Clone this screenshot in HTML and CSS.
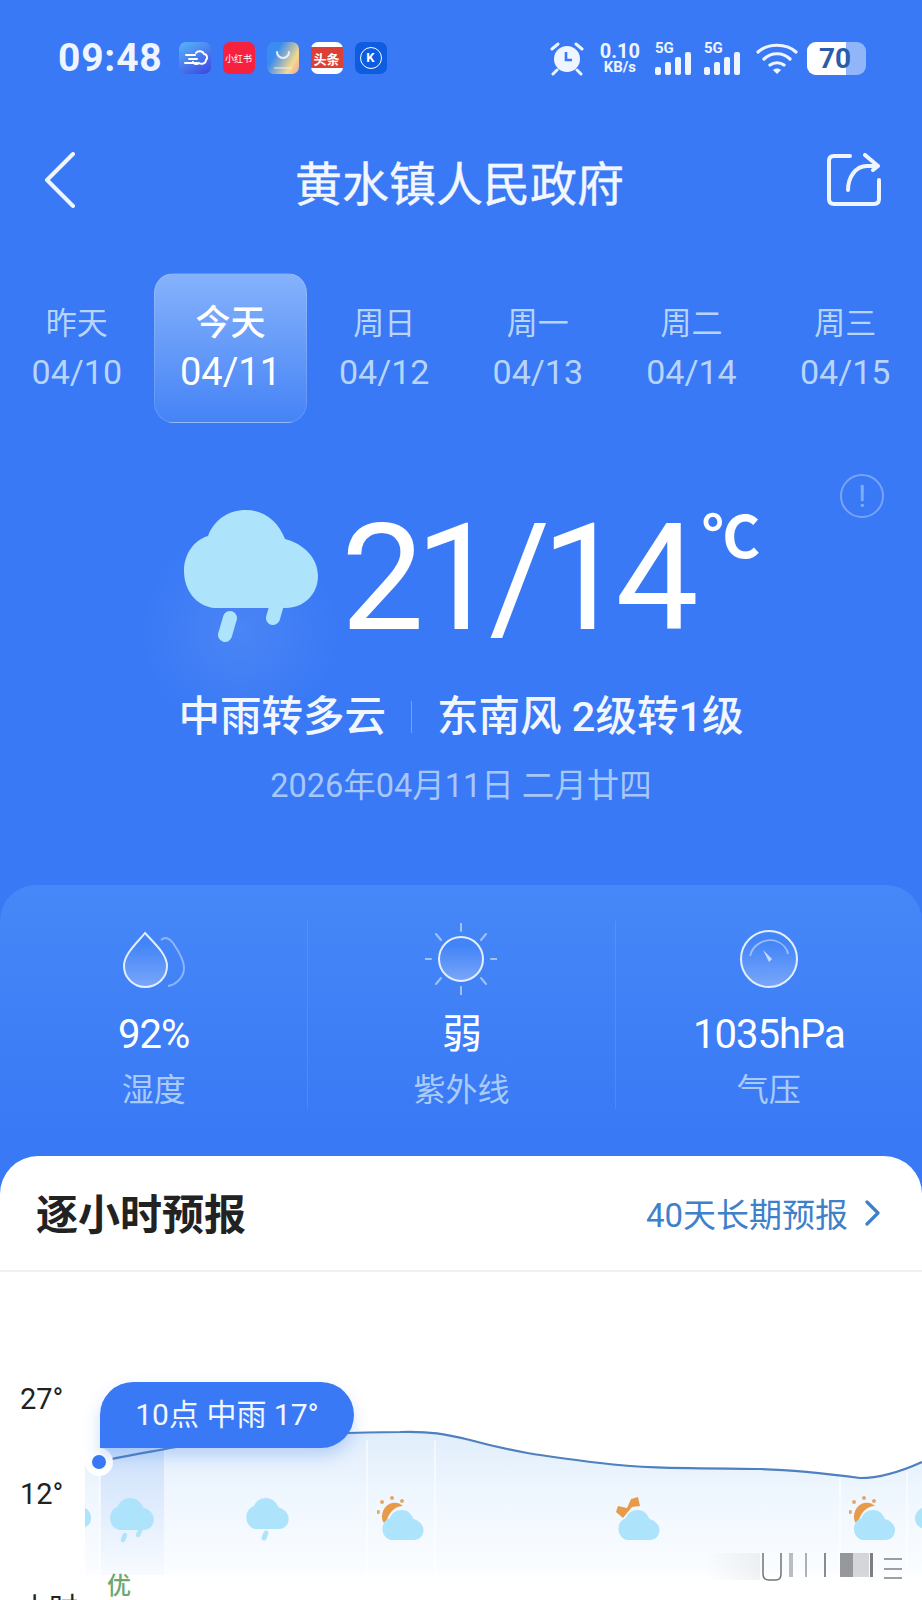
FILE: index.html
```html
<!DOCTYPE html>
<html lang="zh-CN">
<head>
  <meta charset="UTF-8">
  <meta name="viewport" content="width=device-width, initial-scale=1.0">
  <title>黄水镇人民政府 天气</title>
  <link rel="stylesheet" href="styles.css">
</head>
<body>
<svg class="defs" width="0" height="0">
  <defs>
    <symbol id="cloud" viewBox="0 0 134 98">
      <path d="M30 98C12 96 0 80 0 61C0 44 10 30 24 26C30 10 44 0 62 0C80 0 94 11 101 29C120 34 134 48 134 66C134 84 120 98 102 98Z" fill="#ade3fb"/>
    </symbol>
    <symbol id="sun" viewBox="0 0 30 30">
      <path d="M6 26C3 18 7 9 15 7C19 6 23 7 26 10C19 10 12 15 9 27Z" fill="#e89a4b"/>
      <g fill="#e3a66c">
        <circle cx="15" cy="2" r="2"/><circle cx="5" cy="6" r="2"/><circle cx="25" cy="5" r="2"/><circle cx="1" cy="16" r="2"/>
      </g>
    </symbol>
    <linearGradient id="area" x1="0" y1="0" x2="0" y2="1">
      <stop offset="0" stop-color="#e0edfb"/>
      <stop offset="0.4" stop-color="#eef6fe"/>
      <stop offset="1" stop-color="#fbfdff"/>
    </linearGradient>
    <linearGradient id="today" x1="0" y1="0" x2="0" y2="1">
      <stop offset="0" stop-color="#c9defa"/>
      <stop offset="1" stop-color="#f8fbff"/>
    </linearGradient>
    <linearGradient id="fill" x1="0" y1="0" x2="0" y2="1">
      <stop offset="0.2" stop-color="#ffffff" stop-opacity="0"/>
      <stop offset="1" stop-color="#ffffff" stop-opacity="0.3"/>
    </linearGradient>
    <linearGradient id="fade" x1="0" y1="0" x2="1" y2="0">
      <stop offset="0" stop-color="#000000" stop-opacity="0"/>
      <stop offset="1" stop-color="#000000" stop-opacity="0.05"/>
    </linearGradient>
  </defs>
</svg>

<div class="phone">
  <div class="status">
    <div class="status-left">
      <span class="time">09:48</span>
      <div class="apps">
        <span class="app app-cloud">
          <svg viewBox="0 0 32 32"><path d="M7 13h9M10 17h8M6 21h12M17 11c2-3 7-2 8 1c3 0 4 4 2 6c0 3-4 5-7 3c-2 2-5 1-6-1" fill="none" stroke="#fff" stroke-width="2" stroke-linecap="round"/></svg>
        </span>
        <span class="app app-red">小红书</span>
        <span class="app app-pay">
          <svg viewBox="0 0 32 32"><path d="M10 10a6 6 0 0 0 12 0" fill="none" stroke="#e8f2ff" stroke-width="2" stroke-linecap="round"/><path d="M7 26h18" stroke="#e8f2ff" stroke-width="1"/></svg>
        </span>
        <span class="app app-news"><b>头条</b></span>
        <span class="app app-k"><i>K</i></span>
      </div>
    </div>
    <div class="status-right">
      <svg class="alarm" viewBox="0 0 36 36">
        <circle cx="18" cy="19" r="13" fill="#eef5fe"/>
        <path d="M17 12v8h6" fill="none" stroke="#3979f5" stroke-width="2.6"/>
        <path d="M3 9l6-5M33 9l-6-5M8 30l-4 4M28 30l4 4" stroke="#eef5fe" stroke-width="3" stroke-linecap="round"/>
      </svg>
      <div class="speed"><span>0.10</span><span class="speed-unit">KB/s</span></div>
      <div class="signal"><span class="five-g">5G</span><i class="b1"></i><i class="b2"></i><i class="b3"></i><i class="b4"></i></div>
      <div class="signal"><span class="five-g">5G</span><i class="b1"></i><i class="b2"></i><i class="b3"></i><i class="b4"></i></div>
      <svg class="wifi" viewBox="0 0 42 32">
        <path d="M2 10C12 1 30 1 40 10M8 17C15 10 27 10 34 17M14 23C18 20 24 20 28 23" fill="none" stroke="#eef5fe" stroke-width="3.2" stroke-linecap="round"/>
        <path d="M17 28L21 32L25 28C23 26 19 26 17 28Z" fill="#eef5fe"/>
      </svg>
      <div class="battery"><div class="battery-full"></div><span>70</span></div>
    </div>
  </div>

  <div class="nav">
    <svg class="back" viewBox="0 0 32 56"><path d="M29 2L3 28L29 54" fill="none" stroke="#eef5fe" stroke-width="4" stroke-linecap="round" stroke-linejoin="round"/></svg>
    <div class="title">黄水镇人民政府</div>
    <svg class="share" viewBox="0 0 54 54">
      <path d="M23 3H7Q2 3 2 8V46Q2 51 7 51H47Q52 51 52 46V27" fill="none" stroke="#eef5fe" stroke-width="4" stroke-linecap="round"/>
      <path d="M21 37C21 25 28 13 40 13H51M38 2L51 13L46 17" fill="none" stroke="#eef5fe" stroke-width="4" stroke-linecap="round" stroke-linejoin="round"/>
    </svg>
  </div>

  <div class="tabs">
    <div class="tab"><span class="tab-day">昨天</span><span class="tab-date">04/10</span></div>
    <div class="tab tab-on"><span class="tab-day">今天</span><span class="tab-date">04/11</span></div>
    <div class="tab"><span class="tab-day">周日</span><span class="tab-date">04/12</span></div>
    <div class="tab"><span class="tab-day">周一</span><span class="tab-date">04/13</span></div>
    <div class="tab"><span class="tab-day">周二</span><span class="tab-date">04/14</span></div>
    <div class="tab"><span class="tab-day">周三</span><span class="tab-date">04/15</span></div>
  </div>

  <div class="hero">
    <span class="info">!</span>
    <div class="hero-row">
      <svg class="hero-icon" viewBox="0 0 134 132">
        <use href="#cloud" x="0" y="0" width="134" height="98"/>
        <path d="M46 108L41 125M93 94L89 108" stroke="#ade3fb" stroke-width="14" stroke-linecap="round"/>
      </svg>
      <div class="temp">21/14<sup>℃</sup></div>
    </div>
    <div class="cond"><span>中雨转多云</span><i class="cond-sep"></i><span>东南风 2级转1级</span></div>
    <div class="hero-date">2026年04月11日 二月廿四</div>
  </div>

  <div class="stats">
    <div class="stat">
      <svg class="stat-icon" viewBox="0 0 72 72">
        <path d="M43 17C48 13 52 16 55 20C62 30 66 38 66 45C66 54 58 62 50 63" fill="none" stroke="#fff" stroke-opacity=".4" stroke-width="2"/>
        <path d="M27 10C36 20 49 31 49 43C49 55 39 64 27 64C16 64 6 55 6 43C6 31 19 20 27 10Z" fill="url(#fill)" stroke="#e3eefe" stroke-width="2"/>
      </svg>
      <span class="stat-value">92%</span>
      <span class="stat-label">湿度</span>
    </div>
    <div class="stat">
      <svg class="stat-icon" viewBox="0 0 72 72">
        <circle cx="36" cy="36" r="22" fill="url(#fill)" stroke="#e3eefe" stroke-width="2"/>
        <path d="M36 0V8M36 64V72M0 36H6M66 36H72M11 11L16 17M61 11L56 17M11 61L16 55M61 61L56 55" stroke="#fff" stroke-opacity=".5" stroke-width="2" stroke-linecap="round"/>
      </svg>
      <span class="stat-value">弱</span>
      <span class="stat-label">紫外线</span>
    </div>
    <div class="stat">
      <svg class="stat-icon" viewBox="0 0 72 72">
        <circle cx="36" cy="36" r="28" fill="url(#fill)" stroke="#e3eefe" stroke-width="2"/>
        <path d="M17 33C20 21 32 15 43 18C49 20 54 25 55 31" fill="none" stroke="#fff" stroke-opacity=".45" stroke-width="1.8"/>
        <path d="M30 27L39 36L36 39Z" fill="#c6dcfb"/>
      </svg>
      <span class="stat-value">1035hPa</span>
      <span class="stat-label">气压</span>
    </div>
  </div>

  <div class="card">
    <div class="card-head">
      <h2>逐小时预报</h2>
      <a class="card-link">40天长期预报
        <svg viewBox="0 0 16 26"><path d="M3 2L14 13L3 24" fill="none" stroke="#3f80cb" stroke-width="3.2" stroke-linecap="round" stroke-linejoin="round"/></svg>
      </a>
    </div>
    <div class="chart">
      <svg class="chart-svg" viewBox="0 1272 922 328">
        <path d="M85 1466L99 1462C130 1454 165 1450 190 1444C260 1437 340 1432 400 1432C430 1431 445 1434 470 1440C510 1451 540 1456 600 1463C640 1468 670 1468 760 1469C800 1470 830 1474 860 1478C880 1478 900 1472 922 1462V1575H85Z" fill="url(#area)"/>
        <rect x="100" y="1440" width="66" height="135" fill="url(#today)"/>
        <path d="M100 1462V1578M165 1440V1578M367 1440V1578M435 1440V1578M840 1476V1578M907 1472V1578" stroke="#fff" stroke-opacity=".75" stroke-width="1.5"/>
        <path d="M99 1462C130 1454 165 1450 190 1444C260 1437 340 1432 400 1432C430 1431 445 1434 470 1440C510 1451 540 1456 600 1463C640 1468 670 1468 760 1469C800 1470 830 1474 860 1478C880 1478 900 1472 922 1462" fill="none" stroke="#4f80bf" stroke-width="2.2"/>

        <use href="#cloud" x="110" y="1498" width="44" height="32"/>
        <path d="M125 1535L123 1540M140 1531L138 1535" stroke="#ade3fb" stroke-width="4.5" stroke-linecap="round"/>
        <use href="#cloud" x="246" y="1498" width="43" height="31"/>
        <path d="M266 1533L264 1538" stroke="#ade3fb" stroke-width="5" stroke-linecap="round"/>
        <use href="#sun" x="377" y="1496" width="30" height="30"/>
        <use href="#cloud" x="382" y="1510" width="42" height="30"/>
        <path d="M616 1512L623 1518L632 1507L640 1506L638 1497L631 1499L627 1508L618 1506Z" fill="#e89a4b"/>
        <use href="#cloud" x="618" y="1510" width="42" height="30"/>
        <use href="#sun" x="849" y="1496" width="30" height="30"/>
        <use href="#cloud" x="853" y="1510" width="43" height="30"/>
        <path d="M85 1508C89 1510 91 1514 91 1518C91 1522 89 1526 85 1527Z" fill="#ade3fb"/>
        <path d="M922 1508C918 1510 915 1514 915 1518C915 1523 918 1527 922 1528Z" fill="#ade3fb"/>

        <rect x="705" y="1553" width="55" height="27" fill="url(#fade)"/>
        <g class="smudge">
          <path d="M763 1553V1574Q763 1580 769 1580H776Q781 1580 781 1574V1553" fill="none" stroke="#000" stroke-opacity=".55" stroke-width="1.5"/>
          <rect x="789" y="1553" width="4" height="24" opacity=".25"/>
          <rect x="805" y="1553" width="2" height="24" opacity=".3"/>
          <rect x="824" y="1553" width="2" height="24" opacity=".45"/>
          <rect x="840" y="1553" width="13" height="24" opacity=".4"/>
          <rect x="853" y="1553" width="16" height="24" opacity=".15"/>
          <rect x="870" y="1553" width="3" height="24" opacity=".5"/>
          <path d="M884 1559H902M884 1569H902M884 1578H902" stroke="#000" stroke-opacity=".5" stroke-width="1.5"/>
        </g>
      </svg>
      <span class="axis axis-high">27°</span>
      <span class="axis axis-low">12°</span>
      <span class="axis axis-clip">小时</span>
      <div class="dot"></div>
      <div class="tip">10点 中雨 17°</div>
      <span class="air">优</span>
    </div>
  </div>
</div>
</body>
</html>
```

FILE: styles.css
```css
html,body{
  margin: 0;
  background: #3979f5;
  font-family: Roboto, "Noto Sans CJK SC", sans-serif;
}
.defs{
  position: absolute;
}
.phone{
  width: 922px;
  height: 1600px;
  overflow: hidden;
  display: flex;
  flex-direction: column;
  background: #3979f5;
  color: #fff;
}

/* status bar */
.status{
  height: 40px;
  margin-top: 38px;
  padding: 0 56px 0 58px;
  display: flex;
  justify-content: space-between;
  align-items: center;
}
.status-left,.status-right,.apps{
  display: flex;
  align-items: center;
}
.time{
  font-size: 39px;
  font-weight: 700;
  color: #eef5fe;
  letter-spacing: .8px;
}
.apps{
  margin-left: 16px;
  gap: 12px;
}
.app{
  width: 32px;
  height: 32px;
  border-radius: 7px;
  display: flex;
  align-items: center;
  justify-content: center;
  overflow: hidden;
  font-size: 9px;
  white-space: nowrap;
}
.app svg{
  width: 32px;
  height: 32px;
}
.app-cloud{
  background: linear-gradient(150deg, #58b6fb, #3c45e0);
}
.app-red{
  background: #f5213f;
}
.app-pay{
  background: linear-gradient(120deg, #3b8cf0 30%, #f6d98f 75%, #eda4a0);
}
.app-news{
  background: linear-gradient(#fff 15%, #dc3f36 15%, #dc3f36 80%, #fff 80%);
  font-size: 13px;
}
.app-k{
  background: #0e5de0;
}
.app-k i{
  width: 20px;
  height: 20px;
  border: 1.5px solid #fff;
  border-radius: 50%;
  font: 700 13px/20px Roboto, sans-serif;
  text-align: center;
}
.status-right{
  gap: 12px;
  height: 36px;
}
.alarm{
  width: 36px;
  height: 36px;
}
.speed{
  margin: 0 3px;
  display: flex;
  flex-direction: column;
  align-items: center;
  font-size: 20px;
  line-height: 18px;
  font-weight: 700;
  color: #eef5fe;
}
.speed-unit{
  font-size: 15px;
  line-height: 15px;
}
.signal{
  position: relative;
  width: 40px;
  height: 34px;
  display: flex;
  align-items: flex-end;
  gap: 4px;
}
.signal + .signal{
  margin-left: -3px;
}
.signal i{
  width: 6px;
  border-radius: 2px;
  background: #eef5fe;
}
.five-g{
  position: absolute;
  left: 0;
  top: 0;
  font-size: 15px;
  line-height: 14px;
  font-weight: 700;
  color: #eef5fe;
}
.b1{ height: 8px; }
.b2{ height: 13px; }
.b3{ height: 18px; }
.b4{ height: 23px; }
.wifi{
  width: 42px;
  height: 32px;
}
.battery{
  position: relative;
  width: 59px;
  height: 33px;
  margin-left: -3px;
  border-radius: 9px;
  background: rgba(255,255,255,.45);
  font-size: 28px;
  font-weight: 700;
  line-height: 33px;
  color: #2b5cab;
}
.battery-full{
  position: absolute;
  left: 0;
  top: 0;
  bottom: 0;
  width: 39px;
  border-radius: 9px 0 0 9px;
  background: #fff;
}
.battery span{
  position: absolute;
  left: 12px;
}

/* title */
.nav{
  height: 60px;
  margin-top: 72px;
  padding: 0 41px 0 44px;
  display: flex;
  align-items: center;
  justify-content: space-between;
}
.back{
  width: 32px;
  height: 56px;
}
.title{
  margin-left: 16px;
  font-size: 47px;
  font-weight: 400;
  -webkit-text-stroke: .4px #f2f7ff;
  color: #f2f7ff;
}
.share{
  width: 54px;
  height: 54px;
}

/* days */
.tabs{
  margin-top: 63px;
  display: grid;
  grid-template-columns: repeat(6, 1fr);
  height: 150px;
}
.tab{
  display: flex;
  flex-direction: column;
  align-items: center;
  justify-content: center;
  color: #b7d4fb;
}
.tab-day{
  font-size: 31px;
  line-height: 48px;
}
.tab-date{
  font-size: 34px;
  line-height: 48px;
}
.tab-on{
  color: #fff;
  border-radius: 20px;
  border: 1px solid rgba(255,255,255,.14);
  background: linear-gradient(#85b2fb, #4583f6);
}
.tab-on .tab-day{
  font-size: 35px;
  font-weight: 500;
}
.tab-on .tab-date{
  font-size: 38px;
}

/* today */
.hero{
  position: relative;
  display: flex;
  flex-direction: column;
  align-items: center;
  height: 462px;
  background: radial-gradient(circle 100px at 240px 208px, rgba(255,255,255,.09), transparent);
}
.info{
  position: absolute;
  left: 840px;
  top: 51px;
  width: 44px;
  height: 44px;
  box-sizing: border-box;
  border: 2px solid rgba(255,255,255,.32);
  border-radius: 50%;
  font-size: 32px;
  line-height: 40px;
  text-align: center;
  color: rgba(255,255,255,.38);
}
.hero-row{
  width: 922px;
  box-sizing: border-box;
  padding: 87px 0 0 184px;
  height: 247px;
  display: flex;
  align-items: flex-start;
}
.hero-icon{
  width: 134px;
  height: 132px;
}
.temp{
  margin: -31px 0 0 23px;
  font-size: 148px;
  line-height: 200px;
  font-weight: 400;
  letter-spacing: -9px;
}
.temp sup{
  position: absolute;
  left: 702px;
  top: 80px;
  font-size: 58px;
  line-height: 70px;
  letter-spacing: 0;
  font-weight: 700;
}
.cond{
  margin-top: 22px;
  height: 50px;
  display: flex;
  align-items: center;
  font-size: 41.5px;
  line-height: 50px;
  font-weight: 500;
  color: #f2f7ff;
}
.cond-sep{
  width: 1px;
  height: 32px;
  margin: 0 25px;
  background: rgba(255,255,255,.3);
}
.hero-date{
  margin-top: 22px;
  font-size: 32.5px;
  line-height: 44px;
  color: #a7c7f8;
}

/* humidity, uv, pressure */
.stats{
  height: 271px;
  box-sizing: border-box;
  padding-top: 36px;
  border-radius: 36px 36px 0 0;
  display: grid;
  grid-template-columns: repeat(3, 1fr);
  align-items: start;
  background: linear-gradient(#4688f8, #3979f5 90%);
}
.stat{
  height: 188px;
  display: flex;
  flex-direction: column;
  align-items: center;
  border-left: 1px solid rgba(255,255,255,.1);
}
.stat > *{
  flex: none;
}
.stat:first-child{
  border-left: 0;
}
.stat-icon{
  width: 72px;
  height: 72px;
  margin-top: 2px;
}
.stat-value{
  margin-top: 17px;
  font-size: 40px;
  line-height: 46px;
  letter-spacing: -1px;
}
.stat-label{
  margin-top: 12px;
  font-size: 32px;
  line-height: 40px;
  color: #a9cbfa;
}

/* hourly card */
.card{
  flex: 1;
  min-height: 0;
  display: flex;
  flex-direction: column;
  border-radius: 38px 38px 0 0;
  background: #fff;
  color: #222;
}
.card-head{
  height: 114px;
  padding: 0 42px 0 36px;
  display: flex;
  align-items: center;
  justify-content: space-between;
  border-bottom: 2px solid #eef0f3;
}
.card-head h2{
  margin: 0 0 3px;
  font-size: 42px;
  font-weight: 700;
}
.card-link{
  display: flex;
  align-items: center;
  gap: 16px;
  font-size: 33px;
  color: #3f80cb;
}
.card-link svg{
  width: 16px;
  height: 26px;
}
.chart{
  position: relative;
  flex: 1;
  min-height: 0;
  overflow: hidden;
}
.chart-svg{
  display: block;
  width: 922px;
  height: 328px;
}
.smudge rect{
  fill: #000;
}
.axis{
  position: absolute;
  left: 20px;
  font-size: 29px;
  line-height: 34px;
  color: #222;
}
.axis-high{ top: 110px; }
.axis-low{ top: 205px; }
.axis-clip{ top: 320px; }
.dot{
  position: absolute;
  left: 92px;
  top: 183px;
  width: 14px;
  height: 14px;
  border: 7px solid #fff;
  border-radius: 50%;
  background: #3979f5;
  margin: -7px;
}
.tip{
  position: absolute;
  left: 100px;
  top: 110px;
  width: 254px;
  height: 66px;
  border-radius: 33px 33px 33px 0;
  background: #3979f5;
  box-shadow: 0 8px 16px rgba(57,121,245,.25);
  font-size: 30px;
  line-height: 66px;
  text-align: center;
  color: #f2f7ff;
}
.air{
  position: absolute;
  left: 107px;
  top: 300px;
  font-size: 24px;
  line-height: 28px;
  font-weight: 500;
  color: #6ca76f;
}
```
